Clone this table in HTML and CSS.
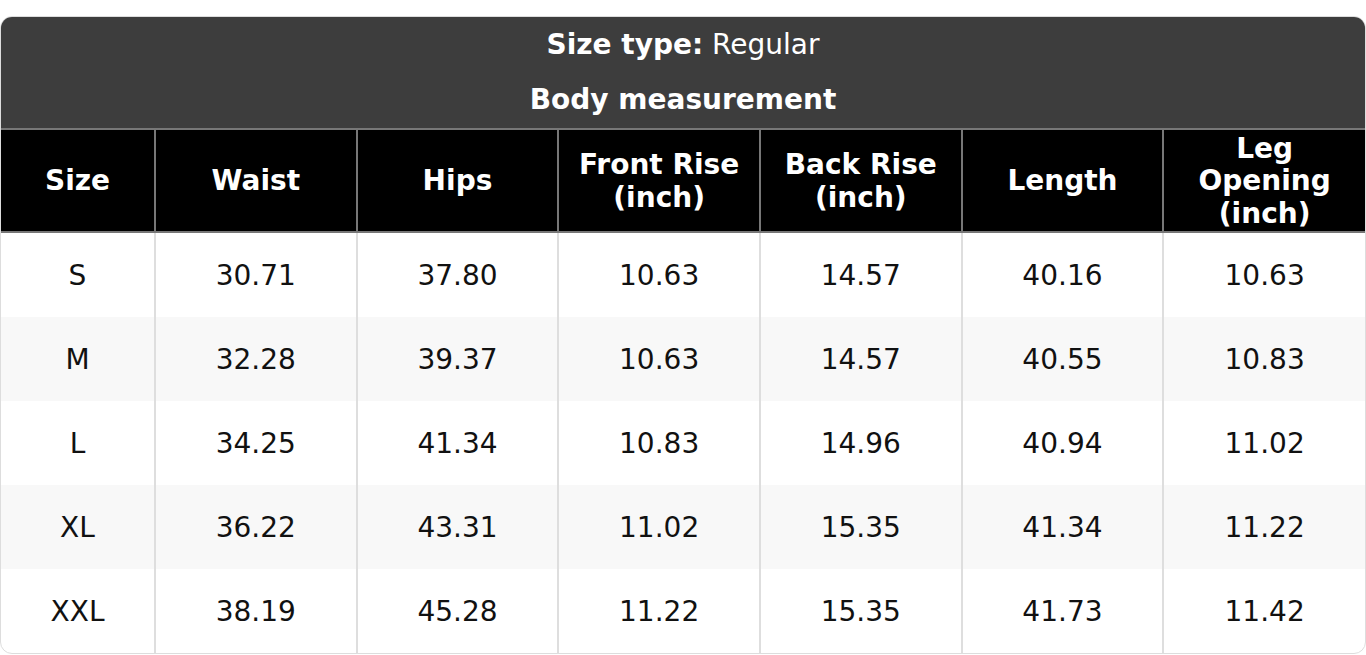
FILE: index.html
```html
<!DOCTYPE html>
<html lang="en">
<head>
<meta charset="utf-8">
<title>Size chart</title>
<link rel="stylesheet" href="styles.css">
</head>
<body>
<div class="chart">
  <div class="title">
    <div class="title-line"><b>Size type:</b>&nbsp;Regular</div>
    <div class="title-line title-line--second"><b>Body measurement</b></div>
  </div>
  <table class="grid">
    <colgroup>
      <col class="col-size">
      <col><col><col><col><col><col>
    </colgroup>
    <thead>
      <tr>
        <th>Size</th>
        <th>Waist</th>
        <th>Hips</th>
        <th>Front Rise<br>(inch)</th>
        <th>Back Rise<br>(inch)</th>
        <th>Length</th>
        <th>Leg<br>Opening<br>(inch)</th>
      </tr>
    </thead>
    <tbody>
      <tr><td>S</td><td>30.71</td><td>37.80</td><td>10.63</td><td>14.57</td><td>40.16</td><td>10.63</td></tr>
      <tr><td>M</td><td>32.28</td><td>39.37</td><td>10.63</td><td>14.57</td><td>40.55</td><td>10.83</td></tr>
      <tr><td>L</td><td>34.25</td><td>41.34</td><td>10.83</td><td>14.96</td><td>40.94</td><td>11.02</td></tr>
      <tr><td>XL</td><td>36.22</td><td>43.31</td><td>11.02</td><td>15.35</td><td>41.34</td><td>11.22</td></tr>
      <tr><td>XXL</td><td>38.19</td><td>45.28</td><td>11.22</td><td>15.35</td><td>41.73</td><td>11.42</td></tr>
    </tbody>
  </table>
</div>
</body>
</html>
```
FILE: styles.css
```css
html, body {
  margin: 0;
  padding: 0;
  background: #ffffff;
}

body {
  font-family: "DejaVu Sans", "Liberation Sans", sans-serif;
  font-size: 28px;
  color: #111111;
}

.chart {
  margin-top: 16px;
  border: 1px solid #dddddd;
  border-radius: 12px;
  overflow: hidden;
  background: #ffffff;
}

.title {
  background: #3d3d3d;
  color: #ffffff;
  text-align: center;
}

.title-line {
  height: 54px;
  display: flex;
  align-items: center;
  justify-content: center;
}

.title-line--second {
  height: 57px;
}

.grid {
  width: 100%;
  border-collapse: collapse;
  table-layout: fixed;
}

.col-size {
  width: 154px;
}

.grid th {
  background: #000000;
  color: #ffffff;
  font-weight: bold;
  line-height: 32.5px;
  height: 99px;
  padding: 2px 8px 0;
  border: 2px solid #777777;
  text-align: center;
  vertical-align: middle;
}

.grid th:first-child {
  border-left: none;
}

.grid th:last-child {
  border-right: none;
}

.grid td {
  height: 84px;
  padding: 0;
  text-align: center;
  vertical-align: middle;
  border-left: 2px solid #dedede;
  border-right: 2px solid #dedede;
}

.grid td:first-child {
  border-left: none;
}

.grid td:last-child {
  border-right: none;
}

.grid tbody tr:nth-child(even) td {
  background: #f8f8f8;
}
```
